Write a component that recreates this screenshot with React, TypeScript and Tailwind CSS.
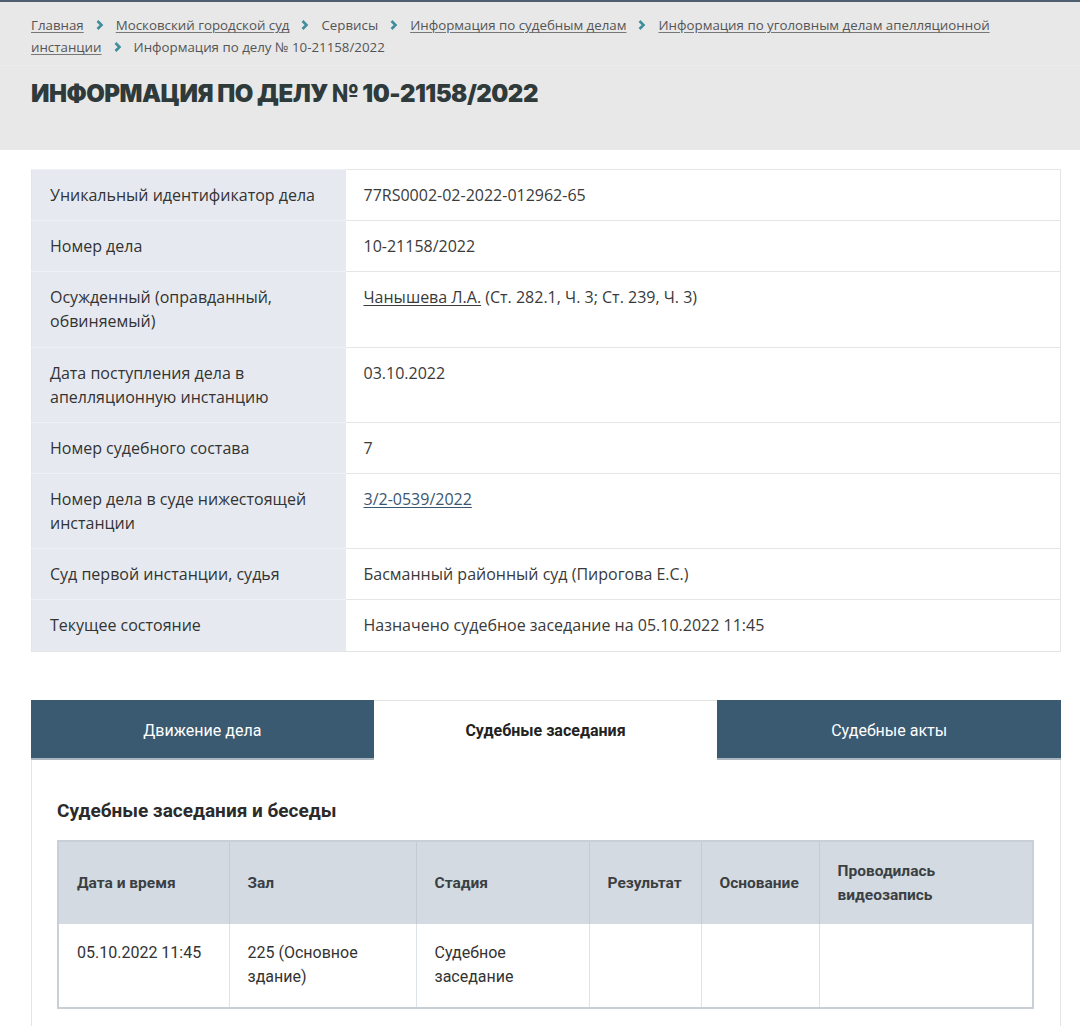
import React from "react";

const crumbs: { t: string; link: boolean }[] = [
  { t: "Главная", link: true },
  { t: "Московский городской суд", link: true },
  { t: "Сервисы", link: false },
  { t: "Информация по судебным делам", link: true },
  { t: "Информация по уголовным делам апелляционной инстанции", link: true },
  { t: "Информация по делу № 10-21158/2022", link: false },
];

function Chevron() {
  return (
    <svg width="8" height="10" viewBox="0 0 8 10" className="inline-block mx-[12px] align-[0px]">
      <path d="M1.5 1 L5.5 5 L1.5 9" stroke="#3f8e9c" strokeWidth="2.6" fill="none" strokeLinejoin="miter" />
    </svg>
  );
}

const rows: { label: React.ReactNode; value: React.ReactNode; h: string }[] = [
  { label: "Уникальный идентификатор дела", value: "77RS0002-02-2022-012962-65", h: "h-[51px]" },
  { label: "Номер дела", value: "10-21158/2022", h: "h-[51px]" },
  {
    label: (
      <>
        Осужденный (оправданный,
        <br />
        обвиняемый)
      </>
    ),
    value: (
      <>
        <span className="underline underline-offset-2">Чанышева Л.А.</span> (Ст. 282.1, Ч. 3; Ст. 239, Ч. 3)
      </>
    ),
    h: "h-[76px]",
  },
  {
    label: (
      <>
        Дата поступления дела в
        <br />
        апелляционную инстанцию
      </>
    ),
    value: "03.10.2022",
    h: "h-[75px]",
  },
  { label: "Номер судебного состава", value: "7", h: "h-[51px]" },
  {
    label: (
      <>
        Номер дела в суде нижестоящей
        <br />
        инстанции
      </>
    ),
    value: <span className="underline underline-offset-2 text-[#3b5670]">3/2-0539/2022</span>,
    h: "h-[75px]",
  },
  { label: "Суд первой инстанции, судья", value: "Басманный районный суд (Пирогова Е.С.)", h: "h-[51px]" },
  { label: "Текущее состояние", value: "Назначено судебное заседание на 05.10.2022 11:45", h: "h-[52px]" },
];

const cols = [
  { t: "Дата и время", w: "w-[171px]" },
  { t: "Зал", w: "w-[187px]" },
  { t: "Стадия", w: "w-[173px]" },
  { t: "Результат", w: "w-[112px]" },
  { t: "Основание", w: "w-[118px]" },
  { t: "Проводилась видеозапись", w: "" },
];

export default function App() {
  return (
    <div className="w-[1080px] min-h-[1026px] bg-white overflow-hidden">
      {/* Header */}
      <div className="bg-[#e8e8e8] border-t-2 border-[#4d5e6e] h-[150px]">
        <div className="px-[31px] pt-[12px] h-[64px] text-[13.3px] leading-[22px] text-[#555] font-['Open_Sans',sans-serif] border-b border-[#ececec]">
          {crumbs.map((c, i) => (
            <React.Fragment key={i}>
              {i > 0 && <Chevron />}
              <span className={c.link ? "underline underline-offset-2 decoration-[#777]" : ""}>{c.t}</span>
            </React.Fragment>
          ))}
        </div>
        <h1 className="px-[31px] pt-[11px] text-[24px] leading-[34px] font-black uppercase text-[#2f3a3a] font-['Inter',sans-serif] tracking-[-0.5px]">
          Информация по делу № 10-21158/2022
        </h1>
      </div>

      {/* Info table */}
      <div className="px-[31px] pt-[19px]">
        <table className="w-[1030px] border-collapse border border-[#e4e4e4] text-[16px] leading-[24px] text-[#333]">
          <tbody>
            {rows.map((r, i) => (
              <tr key={i} className={r.h}>
                <td className="w-[314px] bg-[#e6eaf0] align-top pl-[18px] pt-[13px] font-['Open_Sans',sans-serif] border-t border-[#eef1f5]">
                  {r.label}
                </td>
                <td className="align-top pl-[18px] pt-[13px] font-['Open_Sans',sans-serif] [font-variation-settings:'wdth'_85] border-t border-[#e6e6e6] text-[#3a3a3a]">
                  {r.value}
                </td>
              </tr>
            ))}
          </tbody>
        </table>
      </div>

      {/* Tabs */}
      <div className="px-[31px] pt-[48px]">
        <div className="border border-[#e4e4e4] w-[1030px] font-['Roboto',sans-serif]">
          <div className="flex h-[60px] -m-px">
            <div className="w-[343px] bg-[#3a5a72] text-white text-[16px] flex items-center justify-center border-b-2 border-[#a9b6c0] pt-[3px]">
              Движение дела
            </div>
            <div className="w-[344px] bg-white text-[#222] font-bold text-[16px] flex items-center justify-center border-t border-[#e4e4e4] pt-[1px]">
              Судебные заседания
            </div>
            <div className="w-[344px] bg-[#3a5a72] text-white text-[16px] flex items-center justify-center border-b-2 border-[#a9b6c0] pt-[3px]">
              Судебные акты
            </div>
          </div>
          <div className="px-[25px] pt-[40px] pb-[30px]">
            <h2 className="text-[19px] leading-[24px] font-bold text-[#2b2b2b]">Судебные заседания и беседы</h2>
            <table className="mt-[17px] w-[977px] border-collapse border-2 border-[#c8cfd6] text-[16px] leading-[24px] text-[#333]">
              <thead>
                <tr className="h-[83px] bg-[#d3dae1]">
                  {cols.map((c, i) => (
                    <th
                      key={i}
                      className={`${c.w} text-left font-bold text-[#3a3f44] px-[18px] align-middle border-l border-[#c3cbd3] text-[15.5px]`}
                    >
                      {i === 5 ? (
                        <>
                          Проводилась
                          <br />
                          видеозапись
                        </>
                      ) : (
                        c.t
                      )}
                    </th>
                  ))}
                </tr>
              </thead>
              <tbody>
                <tr className="h-[84px]">
                  <td className="align-top pl-[18px] pt-[17px] border-l border-[#dde2e7]">05.10.2022 11:45</td>
                  <td className="align-top pl-[18px] pt-[17px] border-l border-[#dde2e7]">
                    225 (Основное
                    <br />
                    здание)
                  </td>
                  <td className="align-top pl-[18px] pt-[17px] border-l border-[#dde2e7]">
                    Судебное
                    <br />
                    заседание
                  </td>
                  <td className="border-l border-[#dde2e7]"></td>
                  <td className="border-l border-[#dde2e7]"></td>
                  <td className="border-l border-[#dde2e7]"></td>
                </tr>
              </tbody>
            </table>
          </div>
        </div>
      </div>
    </div>
  );
}
